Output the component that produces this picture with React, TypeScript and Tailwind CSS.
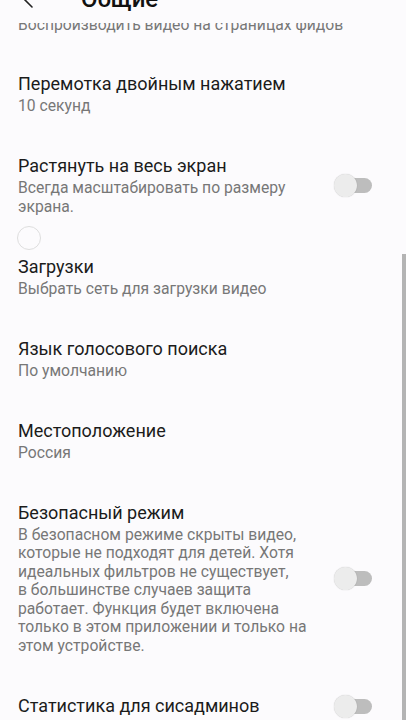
import React from "react";

type Item = {
    title: string;
    lines?: string[];
    toggle?: boolean;
};

const items: Item[] = [
    { title: "Перемотка двойным нажатием", lines: ["10 секунд"] },
    {
        title: "Растянуть на весь экран",
        lines: ["Всегда масштабировать по размеру", "экрана."],
        toggle: true,
    },
    { title: "Загрузки", lines: ["Выбрать сеть для загрузки видео"] },
    { title: "Язык голосового поиска", lines: ["По умолчанию"] },
    { title: "Местоположение", lines: ["Россия"] },
    {
        title: "Безопасный режим",
        lines: [
            "В безопасном режиме скрыты видео,",
            "которые не подходят для детей. Хотя",
            "идеальных фильтров не существует,",
            "в большинстве случаев защита",
            "работает. Функция будет включена",
            "только в этом приложении и только на",
            "этом устройстве.",
        ],
        toggle: true,
    },
    { title: "Статистика для сисадминов", toggle: true },
];

function Toggle() {
    return (
        <div className="relative h-[23px] w-[38px] shrink-0">
            <div className="absolute right-0 top-[4px] h-[15px] w-[32px] rounded-full bg-[#bdbdbd]" />
            <div className="absolute left-0 top-0 h-[23px] w-[23px] rounded-full bg-[#ececec] shadow-[0_0_1px_rgba(0,0,0,0.25)]" />
        </div>
    );
}

function Row({ item }: { item: Item }) {
    return (
        <div className="flex items-center pl-[18px] pr-[34px] pt-[20px] pb-[19.5px]">
            <div className="flex-1">
                <div className="text-[18px] leading-[22px] text-[#1b1b1b]">{item.title}</div>
                {item.lines && (
                    <div className="mt-[2px] text-[15.7px] leading-[18.5px] text-[#777]">
                        {item.lines.map((l) => (
                            <div key={l} className="whitespace-nowrap">
                                {l}
                            </div>
                        ))}
                    </div>
                )}
            </div>
            {item.toggle && <Toggle />}
        </div>
    );
}

export default function App() {
    return (
        <div
            className="relative h-[720px] w-[406px] overflow-hidden bg-[#fcfbfd]"
            style={{ fontFamily: "Roboto, 'Noto Sans', sans-serif" }}
        >
            {/* header, scrolled mostly out of view */}
            <div className="absolute left-0 right-0 top-0 z-10 h-[23px] overflow-hidden bg-[#fcfbfd]">
                <div className="-mt-[16px] flex h-[30px] items-center pl-[16px]">
                    <svg
                        width="20"
                        height="18"
                        viewBox="0 0 20 18"
                        fill="none"
                        stroke="#222"
                        strokeWidth="1.6"
                        strokeLinecap="round"
                        strokeLinejoin="round"
                    >
                        <path d="M16 1 L8 9 L16 17" />
                    </svg>
                    <span className="ml-[45px] text-[24px] font-medium leading-[30px] text-[#111]">
                        Общие
                    </span>
                </div>
            </div>

            {/* settings list */}
            <div className="flex flex-col">
                <div className="pl-[18px] pt-[16px] pb-[18.5px] text-[15.7px] leading-[18.5px] text-[#777]">
                    Воспроизводить видео на страницах фидов
                </div>
                {items.map((it) => (
                    <Row key={it.title} item={it} />
                ))}
            </div>

            {/* touch ripple leftover */}
            <div className="absolute left-[17px] top-[226px] h-[24px] w-[24px] rounded-full border-[1.5px] border-[#dedede]" />

            {/* scrollbar */}
            <div className="absolute bottom-0 right-0 top-[254px] w-[4px] bg-[#b4b4b4]" />
        </div>
    );
}
